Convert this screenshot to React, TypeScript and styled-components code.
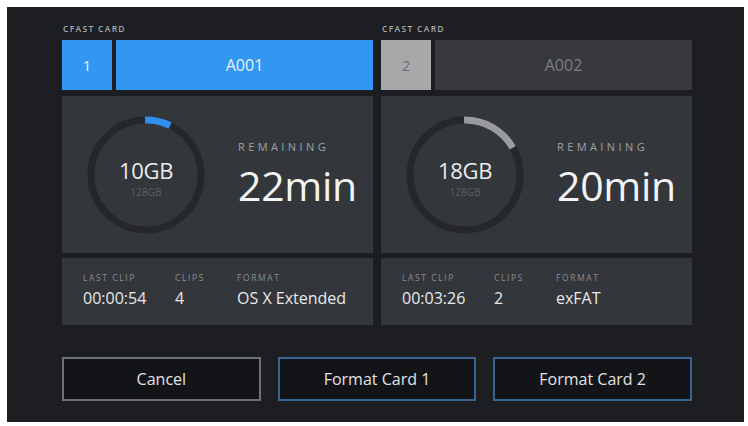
import React from "react";
import styled, { createGlobalStyle } from "styled-components";

const Global = createGlobalStyle`
  html, body {
    margin: 0;
    padding: 0;
    background: #ffffff;
  }
  body {
    font-family: "Open Sans", "Noto Sans", "Liberation Sans", sans-serif;
  }
  * { box-sizing: border-box; }
`;

const Screen = styled.div`
  margin: 7px 0 0 7px;
  width: 737px;
  height: 415px;
  background: #1c1e21;
  padding: 17px 52px 0 55px;
  display: flex;
  flex-direction: column;
`;

const Columns = styled.div`
  display: grid;
  grid-template-columns: 1fr 1fr;
  column-gap: 8px;
`;

const Column = styled.div`
  display: flex;
  flex-direction: column;
`;

const CardLabel = styled.div`
  font-size: 8.5px;
  line-height: 10px;
  font-weight: 600;
  letter-spacing: 1.3px;
  color: #a9abae;
  margin: 0 0 6px 1px;
`;

const TabRow = styled.div`
  display: flex;
  gap: 4px;
  height: 50px;
`;

const SlotBox = styled.div<{ $active: boolean }>`
  width: 50px;
  display: flex;
  align-items: center;
  justify-content: center;
  font-size: 15px;
  background: ${(p) => (p.$active ? "#3397f2" : "#a7a8aa")};
  color: ${(p) => (p.$active ? "#e9f2fc" : "#6c6e71")};
`;

const ClipName = styled.div<{ $active: boolean }>`
  flex: 1;
  display: flex;
  align-items: center;
  justify-content: center;
  font-size: 16px;
  background: ${(p) => (p.$active ? "#3397f2" : "#37393d")};
  color: ${(p) => (p.$active ? "#e9f2fc" : "#7c7f82")};
`;

const StatsPanel = styled.div`
  margin-top: 6px;
  height: 157px;
  background: #33363a;
  display: flex;
  align-items: center;
  padding-left: 24px;
`;

const Gauge = styled.div`
  position: relative;
  width: 120px;
  height: 120px;
  flex: none;
`;

const GaugeText = styled.div`
  position: absolute;
  inset: 0;
  display: flex;
  flex-direction: column;
  align-items: center;
  justify-content: center;
  padding-top: 6px;
`;

const Used = styled.div`
  font-size: 22px;
  line-height: 24px;
  color: #eceded;
  letter-spacing: -0.3px;
`;

const Capacity = styled.div`
  font-size: 10px;
  line-height: 12px;
  margin-top: 4px;
  color: #5e6165;
`;

const Remaining = styled.div`
  margin-left: 32px;
  display: flex;
  flex-direction: column;
  margin-top: 0;
`;

const RemainingLabel = styled.div`
  font-size: 11px;
  line-height: 14px;
  letter-spacing: 3.4px;
  color: #9fa2a5;
`;

const RemainingValue = styled.div`
  font-size: 41px;
  line-height: 50px;
  color: #f3f3f3;
  margin-top: 6px;
  letter-spacing: -0.3px;
`;

const InfoPanel = styled.div`
  margin-top: 5px;
  height: 67px;
  background: #33363a;
  display: grid;
  grid-template-columns: 92px 62px 1fr;
  padding: 14px 0 0 21px;
`;

const InfoCell = styled.div`
  display: flex;
  flex-direction: column;
`;

const InfoLabel = styled.div`
  font-size: 8.5px;
  line-height: 12px;
  letter-spacing: 1.6px;
  color: #8a8d90;
`;

const InfoValue = styled.div`
  font-size: 16px;
  line-height: 22px;
  color: #e8e9ea;
  margin-top: 3px;
  white-space: nowrap;
`;

const ButtonRow = styled.div`
  margin-top: 32px;
  display: grid;
  grid-template-columns: repeat(3, 1fr);
  column-gap: 17px;
`;

const ActionButton = styled.button<{ $primary?: boolean }>`
  height: 44px;
  background: #131417;
  border: 2px solid ${(p) => (p.$primary ? "#3a6491" : "#6f7275")};
  color: #e2e3e4;
  font-family: "Open Sans", "Noto Sans", "Liberation Sans", sans-serif;
  font-size: 16px;
  font-weight: 500;
  padding: 0;
`;

type Card = {
  slot: number;
  clip: string;
  active: boolean;
  used: number;
  total: number;
  fill: number;
  arc: string;
  remaining: string;
  lastClip: string;
  clips: number;
  format: string;
};

const cards: Card[] = [
  {
    slot: 1,
    clip: "A001",
    active: true,
    used: 10,
    total: 128,
    fill: 0.075,
    arc: "#2f8eee",
    remaining: "22min",
    lastClip: "00:00:54",
    clips: 4,
    format: "OS X Extended",
  },
  {
    slot: 2,
    clip: "A002",
    active: false,
    used: 18,
    total: 128,
    fill: 0.17,
    arc: "#9a9b9d",
    remaining: "20min",
    lastClip: "00:03:26",
    clips: 2,
    format: "exFAT",
  },
];

function Ring({ fill, color }: { fill: number; color: string }) {
  const r = 55;
  const c = 2 * Math.PI * r;
  return (
    <svg width="120" height="120" viewBox="0 0 120 120">
      <circle cx="60" cy="60" r={r} fill="none" stroke="#25272a" strokeWidth="7" />
      <circle
        cx="60"
        cy="60"
        r={r}
        fill="none"
        stroke={color}
        strokeWidth="7"
        strokeDasharray={`${c * fill} ${c}`}
        transform="rotate(-91 60 60)"
      />
    </svg>
  );
}

function CardColumn({ card }: { card: Card }) {
  return (
    <Column>
      <CardLabel>CFAST CARD</CardLabel>
      <TabRow>
        <SlotBox $active={card.active}>{card.slot}</SlotBox>
        <ClipName $active={card.active}>{card.clip}</ClipName>
      </TabRow>
      <StatsPanel>
        <Gauge>
          <Ring fill={card.fill} color={card.arc} />
          <GaugeText>
            <Used>{card.used}GB</Used>
            <Capacity>{card.total}GB</Capacity>
          </GaugeText>
        </Gauge>
        <Remaining>
          <RemainingLabel>REMAINING</RemainingLabel>
          <RemainingValue>{card.remaining}</RemainingValue>
        </Remaining>
      </StatsPanel>
      <InfoPanel>
        <InfoCell>
          <InfoLabel>LAST CLIP</InfoLabel>
          <InfoValue>{card.lastClip}</InfoValue>
        </InfoCell>
        <InfoCell>
          <InfoLabel>CLIPS</InfoLabel>
          <InfoValue>{card.clips}</InfoValue>
        </InfoCell>
        <InfoCell>
          <InfoLabel>FORMAT</InfoLabel>
          <InfoValue>{card.format}</InfoValue>
        </InfoCell>
      </InfoPanel>
    </Column>
  );
}

export default function App() {
  return (
    <>
      <Global />
      <Screen>
        <Columns>
          {cards.map((c) => (
            <CardColumn key={c.slot} card={c} />
          ))}
        </Columns>
        <ButtonRow>
          <ActionButton>Cancel</ActionButton>
          <ActionButton $primary>Format Card 1</ActionButton>
          <ActionButton $primary>Format Card 2</ActionButton>
        </ButtonRow>
      </Screen>
    </>
  );
}
